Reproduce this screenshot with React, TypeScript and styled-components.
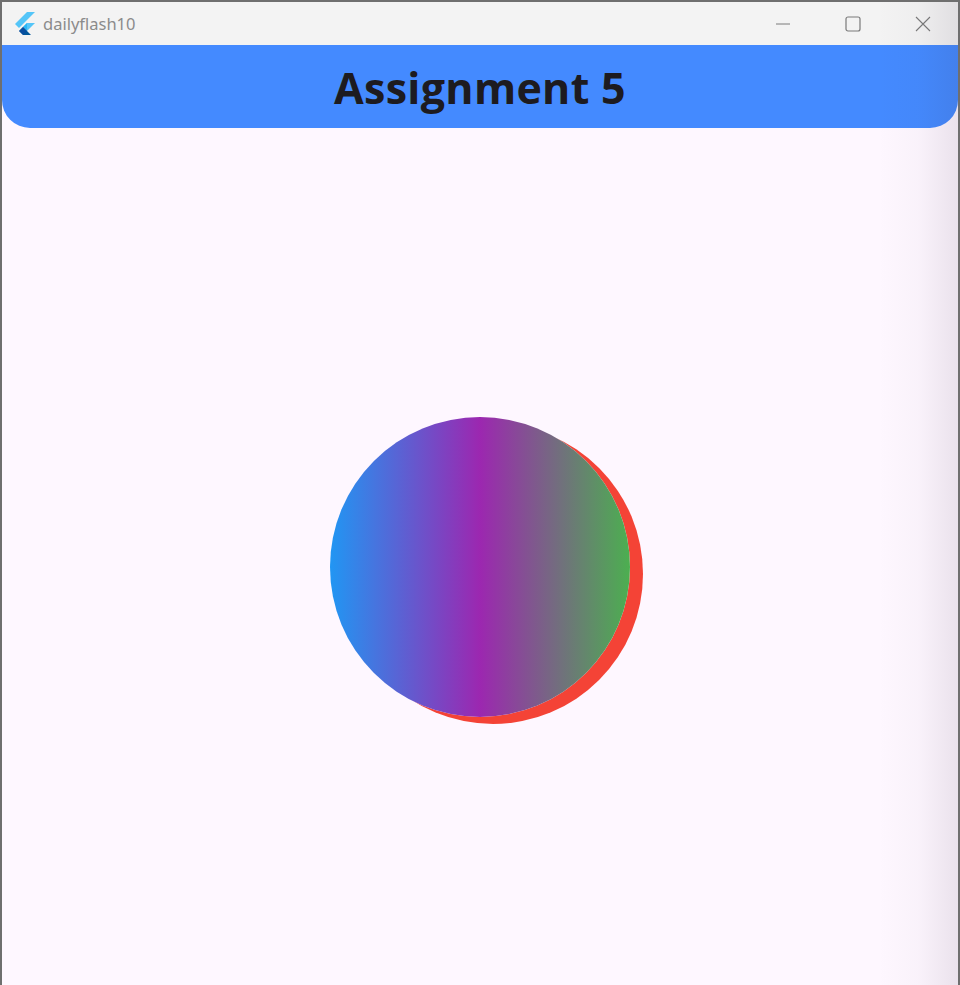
import React from 'react';
import styled, { createGlobalStyle } from 'styled-components';

const GlobalStyle = createGlobalStyle`
  html, body {
    margin: 0;
    padding: 0;
    background: #fef7ff;
  }
  * {
    box-sizing: border-box;
  }
`;

const Frame = styled.div`
  position: relative;
  width: 960px;
  height: 985px;
  overflow: hidden;
  display: flex;
  flex-direction: column;
  border: 2px solid #6f6f6f;
  border-bottom: none;
  background: #fef7ff;
  font-family: 'Open Sans', 'Noto Sans', sans-serif;
`;

const TitleBar = styled.div`
  height: 43px;
  flex-shrink: 0;
  display: flex;
  align-items: center;
  background: #f3f3f3;
  padding-left: 12px;
`;

const AppName = styled.span`
  margin-left: 7px;
  font-size: 16.5px;
  color: #8b8b8b;
  font-family: 'Noto Sans', 'Open Sans', sans-serif;
`;

const Controls = styled.div`
  margin-left: auto;
  display: flex;
  height: 100%;
`;

const ControlButton = styled.div`
  width: 70px;
  height: 100%;
  display: flex;
  align-items: center;
  justify-content: center;
  color: #7a7a7a;
`;

const AppBar = styled.header`
  height: 83px;
  flex-shrink: 0;
  display: flex;
  align-items: center;
  justify-content: center;
  background: #448aff;
  border-radius: 0 0 28px 28px;
`;

const Title = styled.h1`
  margin: 2px 0 0;
  font-size: 43px;
  font-weight: 700;
  color: #1d1b20;
  letter-spacing: 0.3px;
`;

const Body = styled.main`
  height: 878px;
  flex-shrink: 0;
  display: flex;
  align-items: center;
  justify-content: center;
`;

const Ball = styled.div<{ $size: number }>`
  width: ${({ $size }) => $size}px;
  height: ${({ $size }) => $size}px;
  border-radius: 50%;
  background: linear-gradient(90deg, #2196f3 0%, #9c27b0 50%, #4caf50 100%);
  box-shadow: 13px 7px 0 0 #f44336;
`;

const EdgeShade = styled.div`
  position: absolute;
  top: 0;
  right: 0;
  bottom: 0;
  width: 80px;
  pointer-events: none;
  background: linear-gradient(
    90deg,
    rgba(60, 40, 70, 0) 0%,
    rgba(60, 40, 70, 0.025) 50%,
    rgba(60, 40, 70, 0.1) 100%
  );
`;

const FlutterLogo = () => (
  <svg width="22" height="24" viewBox="0 0 22 24">
    <polygon points="13,0 21,0 5,16 1,12" fill="#54c5f8" />
    <polygon points="13,11 21,11 13,19 9,15" fill="#54c5f8" />
    <polygon points="9,15 13,11 13,19" fill="#29b6f6" />
    <polygon points="9,15 13,19 17,23 9,23 5,19" fill="#01579b" />
    <polygon points="5,19 9,15 13,19 9,23" fill="#0d47a1" opacity="0.6" />
  </svg>
);

const App: React.FC = () => {
  return (
    <>
      <GlobalStyle />
      <Frame>
        <TitleBar>
          <FlutterLogo />
          <AppName>dailyflash10</AppName>
          <Controls>
            <ControlButton>
              <svg width="16" height="16" viewBox="0 0 16 16">
                <line x1="1" y1="8" x2="15" y2="8" stroke="currentColor" strokeWidth="1" />
              </svg>
            </ControlButton>
            <ControlButton>
              <svg width="16" height="16" viewBox="0 0 16 16">
                <rect x="1" y="1" width="14" height="14" rx="2" fill="none" stroke="currentColor" strokeWidth="1.2" />
              </svg>
            </ControlButton>
            <ControlButton>
              <svg width="16" height="16" viewBox="0 0 16 16">
                <path d="M1 1 L15 15 M15 1 L1 15" stroke="currentColor" strokeWidth="1.1" />
              </svg>
            </ControlButton>
          </Controls>
        </TitleBar>
        <AppBar>
          <Title>Assignment 5</Title>
        </AppBar>
        <Body>
          <Ball $size={300} />
        </Body>
        <EdgeShade />
      </Frame>
    </>
  );
};

export default App;
